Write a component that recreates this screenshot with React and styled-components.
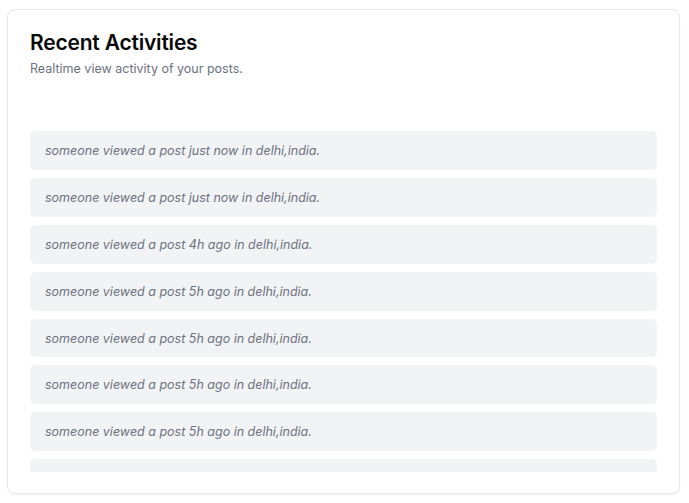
import React from "react";
import styled, { createGlobalStyle } from "styled-components";

const Global = createGlobalStyle`
  html, body { margin: 0; padding: 0; background: #ffffff; }
  body { font-family: Inter, "Noto Sans", sans-serif; }
  * { box-sizing: border-box; }
`;

const Page = styled.div`
  padding: 9px 9px 9px 7px;
`;

const Card = styled.section`
  width: 673px;
  height: 485px;
  border: 1px solid #e5e7eb;
  border-radius: 8px;
  background: #fff;
  box-shadow: 0 1px 2px rgba(0, 0, 0, 0.05);
  padding: 19px 22px 21px 22px;
  display: flex;
  flex-direction: column;
`;

const Title = styled.h2`
  margin: 0;
  font-size: 21px;
  line-height: 28px;
  font-weight: 600;
  color: #09090b;
  letter-spacing: -0.2px;
`;

const Subtitle = styled.p`
  margin: 2px 0 0;
  font-size: 12.5px;
  line-height: 20px;
  color: #6b7280;
`;

const List = styled.ul`
  list-style: none;
  margin: 52px 0 0;
  padding: 0;
  flex: 1;
  overflow: hidden;
  display: flex;
  flex-direction: column;
  gap: 8px;
`;

const Item = styled.li`
  flex: none;
  height: 38.9px;
  display: flex;
  align-items: center;
  padding: 0 15px;
  background: #f2f3f5;
  border-radius: 5px;
  font-size: 12.5px;
  font-style: italic;
  color: #6b7280;
`;

const items = [
  "just now",
  "just now",
  "4h ago",
  "5h ago",
  "5h ago",
  "5h ago",
  "5h ago",
  "5h ago",
  "5h ago",
];

export default function App() {
  return (
    <>
      <Global />
      <Page>
        <Card>
          <Title>Recent Activities</Title>
          <Subtitle>Realtime view activity of your posts.</Subtitle>
          <List>
            {items.map((t, i) => (
              <Item key={i}>someone viewed a post {t} in delhi,india.</Item>
            ))}
          </List>
        </Card>
      </Page>
    </>
  );
}
